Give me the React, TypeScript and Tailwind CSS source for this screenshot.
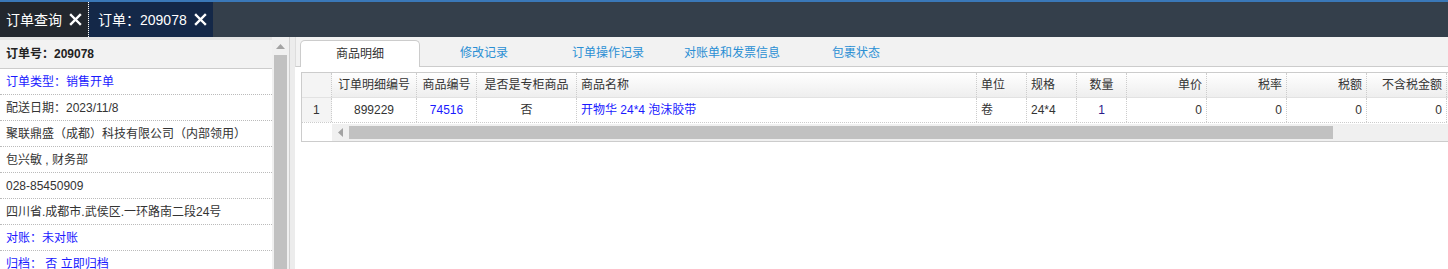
import React from "react";

const FONT = '"Liberation Sans", "Noto Sans CJK SC", Arial, sans-serif';

function X() {
  return (
    <svg width="13" height="13" viewBox="0 0 13 13" className="ml-[7px]">
      <path d="M2 2 L11 11 M11 2 L2 11" stroke="#fff" strokeWidth="2.4" strokeLinecap="square" />
    </svg>
  );
}

const leftRows: { text: React.ReactNode; blue?: boolean }[] = [
  { text: "订单类型：销售开单", blue: true },
  { text: "配送日期：2023/11/8" },
  { text: "聚联鼎盛（成都）科技有限公司（内部领用）" },
  { text: "包兴敏 , 财务部" },
  { text: "028-85450909" },
  { text: "四川省.成都市.武侯区.一环路南二段24号" },
  { text: "对账：未对账", blue: true },
  { text: <>归档：&nbsp;否 立即归档</>, blue: true },
];

type Col = { w: number; h: string; align: "left" | "center" | "right"; v: string; blue?: boolean; hAlign?: "left" | "center" | "right" };
const cols: Col[] = [
  { w: 85, h: "订单明细编号", align: "center", v: "899229" },
  { w: 60, h: "商品编号", align: "center", v: "74516", blue: true },
  { w: 100, h: "是否是专柜商品", align: "center", v: "否" },
  { w: 400, h: "商品名称", align: "left", v: "开物华 24*4 泡沫胶带", blue: true },
  { w: 50, h: "单位", align: "left", v: "卷" },
  { w: 50, h: "规格", align: "left", v: "24*4" },
  { w: 50, h: "数量", align: "center", v: "1", blue: true },
  { w: 80, h: "单价", align: "right", v: "0" },
  { w: 80, h: "税率", align: "right", v: "0" },
  { w: 80, h: "税额", align: "right", v: "0" },
  { w: 80, h: "不含税金额", align: "right", v: "0" },
];

const alignCls = { left: "justify-start pl-[4px]", center: "justify-center", right: "justify-end pr-[4px]" };

export default function App() {
  const tabs = ["商品明细", "修改记录", "订单操作记录", "对账单和发票信息", "包裹状态"];
  return (
    <div className="w-[1448px] h-[269px] overflow-hidden bg-white text-[12px] text-[#333]" style={{ fontFamily: FONT }}>
      {/* top bar */}
      <div className="h-[2px] bg-[#3a78b8]" />
      <div className="h-[35px] bg-[#343f4b] flex">
        <div className="w-[88px] bg-[#22272e] flex items-center pl-[6px] text-white text-[14px] leading-none">
          订单查询<X />
        </div>
        <div className="w-px h-full border-l border-dotted border-white" />
        <div className="w-[124px] bg-[#142848] flex items-center pl-[9px] text-white text-[14px] leading-none">
          订单：209078<X />
        </div>
      </div>

      <div className="flex h-[232px]">
        {/* left panel */}
        <div className="w-[272px] flex flex-col overflow-hidden">
          <div className="h-[32px] bg-[#f2f2f2] border-t-[3px] border-[#e4e4e4] border-b border-b-[#cccccc] flex items-center pl-[6px] font-bold text-[#222] shrink-0">
            订单号：209078
          </div>
          {leftRows.map((r, i) => (
            <div
              key={i}
              className={`h-[26px] shrink-0 border-b border-dotted border-[#bbbbbb] flex items-center pl-[6px] whitespace-nowrap ${r.blue ? "text-[#1a1aff]" : "text-[#333]"}`}
            >
              {r.text}
            </div>
          ))}
        </div>
        {/* left scrollbar */}
        <div className="w-[17px] bg-[#f0f0f0] flex flex-col items-center">
          <div className="h-[18px] w-full flex items-center justify-center">
            <svg width="9" height="5" viewBox="0 0 9 5"><path d="M0 5 L4.5 0 L9 5 Z" fill="#a3a3a3" /></svg>
          </div>
          <div className="w-[13px] flex-1 bg-[#c1c1c1]" />
        </div>
        {/* splitter */}
        <div className="w-px bg-[#d0d0d0]" />
        <div className="w-[5px] bg-[#ececec]" />

        {/* right panel */}
        <div className="flex-1 flex flex-col min-w-0">
          <div className="h-[30px] bg-[#f2f2f2] border-l border-[#dddddd] flex items-end pl-[4px] gap-[4px] border-b border-b-[#cccccc] shrink-0">
            {tabs.map((t, i) =>
              i === 0 ? (
                <div key={t} className="w-[120px] h-[27px] mb-[-1px] bg-white border border-b-0 border-[#cccccc] rounded-t-[5px] flex items-center justify-center text-[#333]">
                  {t}
                </div>
              ) : (
                <div key={t} className="w-[120px] h-[26px] flex items-center justify-center text-[#2a8fd4]">
                  {t}
                </div>
              )
            )}
          </div>
          <div className="pt-[5px] pl-[6px]">
            <div className="border border-[#cccccc] border-r-0 w-[1200px]">
              {/* header */}
              <div className="flex h-[25px] bg-gradient-to-b from-white to-[#eeeeee] border-b border-[#e2e2e2]">
                <div className="w-[30px] shrink-0 border-r border-dotted border-[#cccccc] bg-[#f4f4f4]" />
                {cols.map((c) => (
                  <div
                    key={c.h}
                    style={{ width: c.w }}
                    className={`shrink-0 border-r border-dotted border-[#cccccc] flex items-center text-[#333] ${alignCls[c.align === "left" ? "left" : c.align]}`}
                  >
                    {c.h}
                  </div>
                ))}
              </div>
              {/* data row */}
              <div className="flex h-[25px] border-b border-dotted border-[#cccccc]">
                <div className="w-[30px] shrink-0 border-r border-dotted border-[#cccccc] bg-[#f4f4f4] flex items-center pl-[11px]">1</div>
                {cols.map((c) => (
                  <div
                    key={c.h}
                    style={{ width: c.w }}
                    className={`shrink-0 border-r border-dotted border-[#cccccc] flex items-center whitespace-nowrap ${alignCls[c.align]} ${c.blue ? (c.h === "数量" ? "text-[#2a1a8a]" : "text-[#1a1aff]") : "text-[#333]"}`}
                  >
                    {c.v}
                  </div>
                ))}
              </div>
              {/* horizontal scrollbar */}
              <div className="flex h-[18px] pt-[1px]">
                <div className="w-[30px] shrink-0 bg-white" />
                <div className="w-[17px] shrink-0 bg-[#f0f0f0] flex items-center justify-center">
                  <svg width="5" height="9" viewBox="0 0 5 9"><path d="M5 0 L0 4.5 L5 9 Z" fill="#a3a3a3" /></svg>
                </div>
                <div className="flex-1 bg-[#f0f0f0] flex items-center">
                  <div className="w-[984px] h-[13px] bg-[#c1c1c1]" />
                </div>
              </div>
            </div>
          </div>
        </div>
      </div>
    </div>
  );
}
